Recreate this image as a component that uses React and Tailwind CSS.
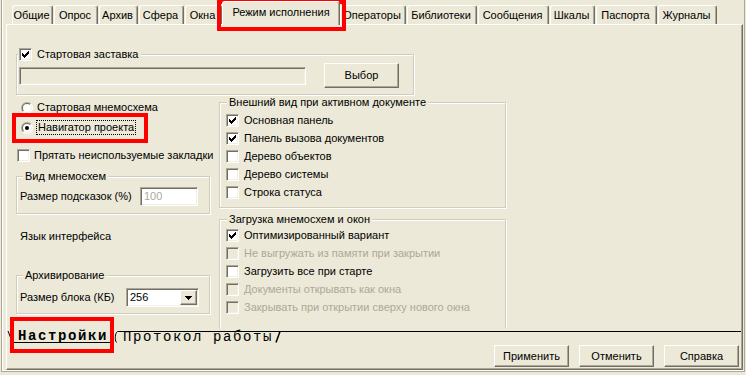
import React from 'react';

const tabs = [
  { label: 'Общие', cls: 'ml-[10px] w-[41px]' },
  { label: 'Опрос', cls: 'ml-[1px] w-[44px]' },
  { label: 'Архив', cls: 'ml-[1px] w-[39px]' },
  { label: 'Сфера', cls: 'ml-[1px] w-[45px]' },
  { label: 'Окна', cls: 'ml-[1px] w-[37px]' },
  { label: 'Режим исполнения', cls: 'w-[118px]', active: true },
  { label: 'Операторы', cls: 'w-[66px]' },
  { label: 'Библиотеки', cls: 'ml-[1px] w-[70px]' },
  { label: 'Сообщения', cls: 'ml-[1px] w-[71px]' },
  { label: 'Шкалы', cls: 'ml-[1px] w-[45px]' },
  { label: 'Паспорта', cls: 'ml-[1px] w-[61px]' },
  { label: 'Журналы', cls: 'ml-[1px] w-[59px]' },
];

const viewOptions = [
  { label: 'Основная панель', checked: true },
  { label: 'Панель вызова документов', checked: true },
  { label: 'Дерево объектов' },
  { label: 'Дерево системы' },
  { label: 'Строка статуса' },
];

const loadOptions = [
  { label: 'Оптимизированный вариант', checked: true },
  { label: 'Не выгружать из памяти при закрытии', disabled: true },
  { label: 'Загрузить все при старте' },
  { label: 'Документы открывать как окна', disabled: true },
  { label: 'Закрывать при открытии сверху нового окна', disabled: true },
];

// classic 7x7 check mark, pixel by pixel
const checkPixels = [
  [6, 0], [5, 1], [6, 1], [0, 2], [4, 2], [5, 2], [6, 2],
  [0, 3], [1, 3], [3, 3], [4, 3], [5, 3], [0, 4], [1, 4], [2, 4], [3, 4], [4, 4],
  [1, 5], [2, 5], [3, 5], [2, 6],
];

const sunken =
  'border border-t-[#ACA899] border-l-[#ACA899] border-r-white border-b-white shadow-[inset_1px_1px_0_#716F64,inset_-1px_-1px_0_#F1EFE2]';
const raised =
  'border border-t-white border-l-white border-r-[#716F64] border-b-[#716F64] shadow-[inset_-1px_-1px_0_#ACA899]';

function Check({ checked, disabled }) {
  return (
    <span className={`relative block w-[13px] h-[13px] shrink-0 ${sunken} ${disabled ? 'bg-[#ECE9D8]' : 'bg-white'}`}>
      {checked && (
        <svg className="absolute left-[2px] top-[2px]" width="7" height="7" viewBox="0 0 7 7" shapeRendering="crispEdges">
          {checkPixels.map(([x, y]) => (
            <rect key={`${x}-${y}`} x={x} y={y} width="1" height="1" fill={disabled ? '#ACA899' : '#000'} />
          ))}
        </svg>
      )}
    </span>
  );
}

function Radio({ checked }) {
  return (
    <svg width="12" height="12" viewBox="0 0 12 12" className="shrink-0">
      <defs>
        <linearGradient id="rOuter" x1="0" y1="0" x2="1" y2="1">
          <stop offset="0.5" stopColor="#ACA899" />
          <stop offset="0.5" stopColor="#FFFFFF" />
        </linearGradient>
        <linearGradient id="rInner" x1="0" y1="0" x2="1" y2="1">
          <stop offset="0.5" stopColor="#716F64" />
          <stop offset="0.5" stopColor="#F1EFE2" />
        </linearGradient>
      </defs>
      <circle cx="6" cy="6" r="6" fill="url(#rOuter)" />
      <circle cx="6" cy="6" r="5" fill="url(#rInner)" />
      <circle cx="6" cy="6" r="4" fill="#fff" />
      {checked && <circle cx="6" cy="6" r="2" fill="#000" />}
    </svg>
  );
}

function Group({ cls, legend, legendCls, children }) {
  return (
    <div className={`${cls} border border-[#D0CDBE] shadow-[inset_1px_1px_0_#fff,1px_1px_0_#fff]`}>
      <div className={`${legendCls} -mt-[7px] h-[13px] w-fit bg-[#ECE9D8] flex items-center leading-[13px] whitespace-nowrap`}>
        {legend}
      </div>
      {children}
    </div>
  );
}

function CheckRow({ label, checked, disabled }) {
  return (
    <div className="h-[13px] flex items-center whitespace-nowrap">
      <Check checked={checked} disabled={disabled} />
      <span className={`ml-[5px] leading-[13px] ${disabled ? 'text-[#ACA899]' : ''}`}>{label}</span>
    </div>
  );
}

function Tab({ label, cls, active }) {
  if (active) {
    return (
      <div
        className={`${cls} relative z-10 h-[24px] -mb-px pt-[4px] bg-[#ECE9D8] border-t border-l border-r border-white border-r-[#716F64] rounded-t-[3px] shadow-[inset_-1px_0_0_#ACA899] text-center leading-[13px] whitespace-nowrap`}
      >
        {label}
      </div>
    );
  }
  return (
    <div
      className={`${cls} h-[19px] border-t border-l border-r border-white border-r-[#716F64] rounded-t-[3px] shadow-[inset_-1px_0_0_#ACA899] flex items-center justify-center pr-[2px] leading-[13px] whitespace-nowrap`}
    >
      {label}
    </div>
  );
}

export default function App() {
  return (
    <div className="relative w-[746px] h-[375px] overflow-hidden bg-[#ECE9D8] text-black text-[11px] font-['Liberation_Sans',Arial,sans-serif]">
      {/* form frame */}
      <div className="ml-[1px] w-[744px] h-[372px] border-l border-r border-b border-[#ACA899] shadow-[inset_1px_0_0_#fff,inset_0_-1px_0_#fff]">
        {/* top tabs */}
        <div className="flex items-end h-[24px]">
          {tabs.map((t) => (
            <Tab key={t.label} {...t} />
          ))}
        </div>

        {/* tab sheet */}
        <div className="ml-[4px] w-[737px] h-[346px] flex flex-col border border-white border-r-[#716F64] border-b-[#716F64] shadow-[inset_-1px_-1px_0_#ACA899]">
          {/* Стартовая заставка */}
          <Group cls="mt-[29px] ml-[9px] w-[398px] h-[41px] shrink-0" legend={
            <>
              <Check checked />
              <span className="ml-[5px]">Стартовая заставка</span>
            </>
          } legendCls="ml-[1px] pl-[1px] pr-[3px]">
            <div className="mt-[2px] flex items-center">
              <div className={`ml-[2px] w-[287px] h-[18px] ${sunken} bg-[#ECE9D8]`} />
              <div className={`ml-[18px] w-[75px] h-[25px] ${raised} flex items-center justify-center`}>Выбор</div>
            </div>
          </Group>

          <div className="flex h-[233px] shrink-0 overflow-hidden">
            {/* left column */}
            <div className="w-[212px] shrink-0 flex flex-col">
              <div className="mt-[6px] ml-[14px] h-[13px] flex items-center">
                <Radio />
                <span className="ml-[4px] leading-[13px]">Стартовая мнемосхема</span>
              </div>
              <div className="mt-[7px] ml-[14px] h-[13px] flex items-center">
                <Radio checked />
                <span className="ml-[3px] px-[1px] border border-dotted border-black leading-[13px]">Навигатор проекта</span>
              </div>
              <div className="mt-[15px] ml-[10px] h-[13px] flex items-center whitespace-nowrap">
                <Check />
                <span className="ml-[4px] leading-[13px]">Прятать неиспользуемые закладки</span>
              </div>

              <Group cls="mt-[14px] ml-[9px] w-[194px] h-[38px] shrink-0" legend="Вид мнемосхем" legendCls="ml-[6px] px-[2px]">
                <div className="mt-[4px] pl-[3px] flex items-center">
                  <span className="w-[120px] shrink-0">Размер подсказок (%)</span>
                  <div className={`w-[58px] h-[19px] ${sunken} bg-white flex items-center pl-[3px] text-[#ACA899]`}>100</div>
                </div>
              </Group>

              <div className="mt-[16px] ml-[13px] h-[13px] leading-[13px]">Язык интерфейса</div>

              <Group cls="mt-[32px] ml-[9px] w-[194px] h-[39px] shrink-0" legend="Архивирование" legendCls="ml-[6px] px-[2px]">
                <div className="mt-[6px] pl-[3px] flex items-center">
                  <span className="w-[106px] shrink-0">Размер блока (КБ)</span>
                  <div className={`w-[73px] h-[19px] ${sunken} bg-white flex items-center`}>
                    <span className="flex-1 pl-[3px]">256</span>
                    <div className={`w-[17px] h-[15px] mr-px ${raised} bg-[#ECE9D8] flex items-center justify-center`}>
                      <svg width="7" height="4" viewBox="0 0 7 4" shapeRendering="crispEdges">
                        <path d="M0 0h7v1h-1v1h-1v1h-1v1h-1v-1h-1v-1h-1v-1h-1z" fill="#000" />
                      </svg>
                    </div>
                  </div>
                </div>
              </Group>
            </div>

            {/* right column */}
            <div className="w-[287px] shrink-0 flex flex-col">
              <Group cls="mt-[7px] h-[106px] shrink-0" legend="Внешний вид при активном документе" legendCls="ml-[7px] px-[2px]">
                <div className="mt-[5px] ml-[6px] flex flex-col gap-[5px]">
                  {viewOptions.map((o) => (
                    <CheckRow key={o.label} {...o} />
                  ))}
                </div>
              </Group>
              <Group cls="mt-[11px] h-[130px] shrink-0" legend="Загрузка мнемосхем и окон" legendCls="ml-[7px] px-[2px]">
                <div className="mt-[3px] ml-[6px] flex flex-col gap-[5px]">
                  {loadOptions.map((o) => (
                    <CheckRow key={o.label} {...o} />
                  ))}
                </div>
              </Group>
            </div>
          </div>

          {/* bottom tab set */}
          <div className="mt-[3px] h-[12px] flex shrink-0 font-['Liberation_Mono','Courier_New',monospace] text-[14px] tracking-[1.6px]">
            <svg width="6" height="12" viewBox="0 0 6 12" className="shrink-0">
              <path d="M1 0 L5.5 11.5" stroke="#000" strokeWidth="1" fill="none" />
            </svg>
            <div className="w-[97px] shrink-0 border-b border-black pl-[5px] font-bold leading-[11px] whitespace-nowrap">Настройки</div>
            <svg width="9" height="12" viewBox="0 0 9 12" className="shrink-0">
              <path d="M0.5 0 L3.5 7" stroke="#000" strokeWidth="1" fill="none" />
              <path d="M9 0.5 H7.5 C5 2 4.5 9 6.5 11.5" stroke="#000" strokeWidth="1" fill="none" />
            </svg>
            <div className="w-[156px] shrink-0 border-t border-black pl-[4px] leading-[11px] whitespace-nowrap">Протокол работы</div>
            <svg width="6" height="12" viewBox="0 0 6 12" className="shrink-0">
              <path d="M0 0.5 H6" stroke="#000" strokeWidth="1" />
              <path d="M1 11.5 L5 0.5" stroke="#000" strokeWidth="1.5" fill="none" />
            </svg>
            <div className="flex-1 border-t border-black mr-[1px]" />
          </div>

          {/* buttons */}
          <div className="mt-[2px] pr-[3px] flex justify-end gap-[10px]">
            {['Применить', 'Отменить', 'Справка'].map((b) => (
              <div key={b} className={`w-[75px] h-[22px] ${raised} flex items-center justify-center`}>{b}</div>
            ))}
          </div>
        </div>
      </div>

      {/* red annotation frames */}
      <div className="absolute left-[217px] top-0 w-[129px] h-[31px] border-4 border-[#ff0000]" />
      <div className="absolute left-[12px] top-[113px] w-[136px] h-[30px] border-4 border-[#ff0000]" />
      <div className="absolute left-[10px] top-[317px] w-[104px] h-[36px] border-4 border-[#ff0000]" />
    </div>
  );
}
